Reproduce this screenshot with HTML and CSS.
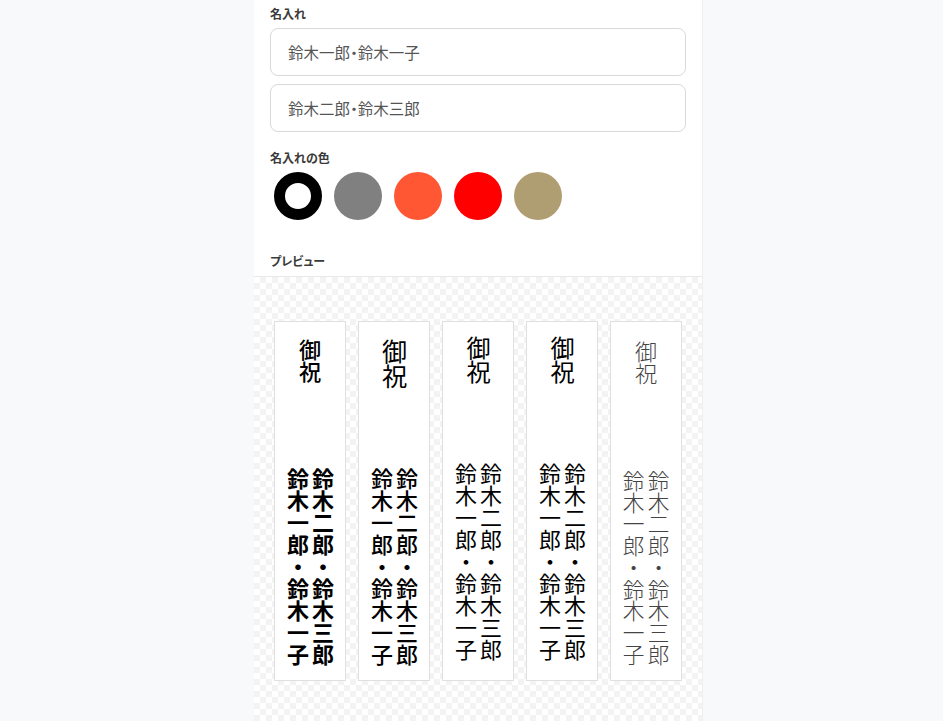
FILE: index.html
```html
<!DOCTYPE html>
<html lang="ja">
<head>
<meta charset="utf-8">
<title>名入れ</title>
<link rel="stylesheet" href="styles.css">
</head>
<body>
<div class="panel">
  <div class="form">
    <div class="label">名入れ</div>
    <div class="inputs">
      <input class="field" type="text" value="鈴木一郎・鈴木一子">
      <input class="field" type="text" value="鈴木二郎・鈴木三郎">
    </div>
    <div class="label label-color">名入れの色</div>
    <div class="swatches">
      <span class="swatch swatch-black selected"></span>
      <span class="swatch swatch-gray"></span>
      <span class="swatch swatch-orange"></span>
      <span class="swatch swatch-red"></span>
      <span class="swatch swatch-gold"></span>
    </div>
    <div class="label label-preview">プレビュー</div>
  </div>
  <div class="preview">
    <div class="card card-1">
      <div class="title">御祝</div>
      <div class="names"><span>鈴木二郎・鈴木三郎</span><span>鈴木一郎・鈴木一子</span></div>
    </div>
    <div class="card card-2">
      <div class="title">御祝</div>
      <div class="names"><span>鈴木二郎・鈴木三郎</span><span>鈴木一郎・鈴木一子</span></div>
    </div>
    <div class="card card-3">
      <div class="title">御祝</div>
      <div class="names"><span>鈴木二郎・鈴木三郎</span><span>鈴木一郎・鈴木一子</span></div>
    </div>
    <div class="card card-4">
      <div class="title">御祝</div>
      <div class="names"><span>鈴木二郎・鈴木三郎</span><span>鈴木一郎・鈴木一子</span></div>
    </div>
    <div class="card card-5">
      <div class="title">御祝</div>
      <div class="names"><span>鈴木二郎・鈴木三郎</span><span>鈴木一郎・鈴木一子</span></div>
    </div>
  </div>
</div>
</body>
</html>
```

FILE: styles.css
```css
html, body {
  margin: 0;
  padding: 0;
  height: 100%;
}

body {
  background: #f8f9fb;
  font-family: "Noto Sans CJK JP", "Noto Sans", sans-serif;
  color: #333;
}

.panel {
  width: 448px;
  margin-left: 254px;
  min-height: 100%;
  background: #fff;
  border-right: 1px solid #eceef1;
  display: flex;
  flex-direction: column;
}

.form {
  padding: 6px 16px 7px;
  border-bottom: 1px solid #e8e8e8;
}

.label {
  font-size: 12px;
  font-weight: 700;
  line-height: 16px;
  color: #3a3a3a;
  font-feature-settings: "palt";
}

.inputs {
  margin-top: 6px;
  display: flex;
  flex-direction: column;
  gap: 8px;
}

.field {
  box-sizing: border-box;
  width: 100%;
  height: 48px;
  padding: 0 17px;
  border: 1px solid #d9d9d9;
  border-radius: 8px;
  font-family: "Noto Sans CJK JP", sans-serif;
  font-size: 15.5px;
  font-feature-settings: "palt";
  color: #555;
  background: #fff;
  outline: none;
}

.label-color {
  margin-top: 18px;
}

.swatches {
  display: flex;
  gap: 12px;
  margin-top: 6px;
  padding-left: 4px;
}

.swatch {
  box-sizing: border-box;
  width: 48px;
  height: 48px;
  border-radius: 50%;
  display: block;
}

.swatch-black { background: #000; }
.swatch-black.selected {
  background: #fff;
  border: 11px solid #000;
}
.swatch-gray { background: #808080; }
.swatch-orange { background: #ff5733; }
.swatch-red { background: #ff0000; }
.swatch-gold { background: #af9e71; }

.label-preview {
  margin-top: 33px;
}

.preview {
  flex: 1;
  display: flex;
  gap: 12px;
  padding: 44px 20px 30px;
  background-color: #fff;
  background-image: conic-gradient(#f3f3f3 25%, #fff 0 50%, #f3f3f3 0 75%, #fff 0);
  background-size: 12px 12px;
}

.card {
  box-sizing: border-box;
  width: 72px;
  height: 360px;
  background: #fff;
  border: 1px solid #e0e0e0;
  display: flex;
  flex-direction: column;
  align-items: center;
  justify-content: space-between;
  padding: 17px 0 14px;
  color: #000;
}

.title {
  writing-mode: vertical-rl;
  font-size: 22px;
  line-height: 1;
}

.names {
  writing-mode: vertical-rl;
  font-size: 22px;
  line-height: 25px;
  display: flex;
  flex-direction: column;
}

.names span {
  display: block;
}

.card-1 .title { font-weight: 500; }
.card-1 .names { font-weight: 700; }

.card-2 .title { font-size: 25px; }
.card-2 .names { font-weight: 500; }

.card-3 { padding-top: 14px; padding-bottom: 19px; }
.card-3 .title { font-size: 24px; }
.card-3 .names { font-weight: 400; }

.card-4 { padding-top: 14px; padding-bottom: 19px; }
.card-4 .title { font-size: 24px; }
.card-4 .names { font-weight: 400; }

.card-5 { color: #444; padding-top: 19px; padding-bottom: 15px; }
.card-5 .title { font-weight: 300; font-size: 22px; }
.card-5 .names { font-weight: 300; font-size: 21.7px; }
```
